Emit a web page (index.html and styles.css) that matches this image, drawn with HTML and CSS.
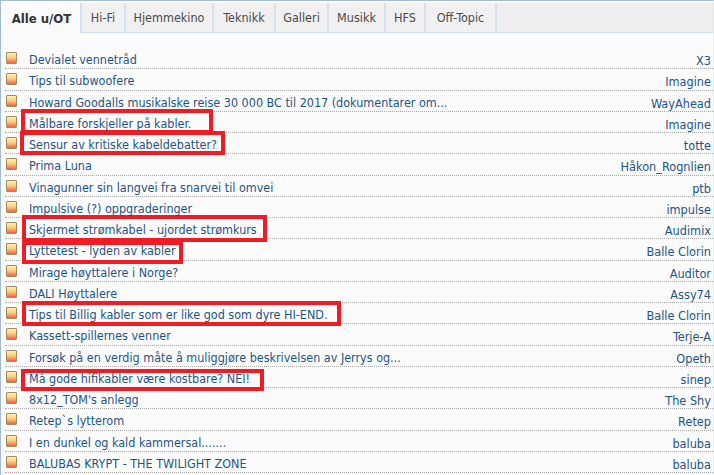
FILE: index.html
```html
<!DOCTYPE html>
<html lang="no">
<head>
<meta charset="utf-8">
<title>Forum</title>
<link rel="stylesheet" href="styles.css">
</head>
<body>
<div class="frame">
  <nav class="tabs">
    <a class="tab active">Alle u/OT</a>
    <a class="tab">Hi-Fi</a>
    <a class="tab">Hjemmekino</a>
    <a class="tab">Teknikk</a>
    <a class="tab">Galleri</a>
    <a class="tab">Musikk</a>
    <a class="tab">HFS</a>
    <a class="tab">Off-Topic</a>
  </nav>
  <ul class="list">
    <li class="row"><i class="ico"></i><a class="title">Devialet vennetråd</a><span class="user">X3</span></li>
    <li class="row"><i class="ico"></i><a class="title">Tips til subwoofere</a><span class="user">Imagine</span></li>
    <li class="row"><i class="ico"></i><a class="title">Howard Goodalls musikalske reise 30 000 BC til 2017 (dokumentarer om...</a><span class="user">WayAhead</span></li>
    <li class="row"><i class="ico"></i><a class="title">Målbare forskjeller på kabler.</a><span class="user">Imagine</span><b class="mark m1"></b></li>
    <li class="row"><i class="ico"></i><a class="title">Sensur av kritiske kabeldebatter?</a><span class="user">totte</span><b class="mark m2"></b></li>
    <li class="row"><i class="ico"></i><a class="title">Prima Luna</a><span class="user">Håkon_Rognlien</span></li>
    <li class="row"><i class="ico"></i><a class="title">Vinagunner sin langvei fra snarvei til omvei</a><span class="user">ptb</span></li>
    <li class="row"><i class="ico"></i><a class="title">Impulsive (?) oppgraderinger</a><span class="user">impulse</span></li>
    <li class="row"><i class="ico"></i><a class="title">Skjermet strømkabel - ujordet strømkurs</a><span class="user">Audimix</span><b class="mark m3"></b></li>
    <li class="row"><i class="ico"></i><a class="title">Lyttetest - lyden av kabler</a><span class="user">Balle Clorin</span><b class="mark m4"></b></li>
    <li class="row"><i class="ico"></i><a class="title">Mirage høyttalere i Norge?</a><span class="user">Auditor</span></li>
    <li class="row"><i class="ico"></i><a class="title">DALI Høyttalere</a><span class="user">Assy74</span></li>
    <li class="row"><i class="ico"></i><a class="title">Tips til Billig kabler som er like god som dyre HI-END.</a><span class="user">Balle Clorin</span><b class="mark m5"></b></li>
    <li class="row"><i class="ico"></i><a class="title">Kassett-spillernes venner</a><span class="user">Terje-A</span></li>
    <li class="row"><i class="ico"></i><a class="title">Forsøk på en verdig måte å muliggjøre beskrivelsen av Jerrys og...</a><span class="user">Opeth</span></li>
    <li class="row"><i class="ico"></i><a class="title">Må gode hifikabler være kostbare? NEI!</a><span class="user">sinep</span><b class="mark m6"></b></li>
    <li class="row"><i class="ico"></i><a class="title">8x12_TOM's anlegg</a><span class="user">The Shy</span></li>
    <li class="row"><i class="ico"></i><a class="title">Retep`s lytterom</a><span class="user">Retep</span></li>
    <li class="row"><i class="ico"></i><a class="title">I en dunkel og kald kammersal.......</a><span class="user">baluba</span></li>
    <li class="row"><i class="ico"></i><a class="title">BALUBAS KRYPT - THE TWILIGHT ZONE</a><span class="user">baluba</span></li>
  </ul>
</div>
</body>
</html>
```
FILE: styles.css
```css
* { box-sizing: border-box; }
html, body { margin: 0; padding: 0; height: 100%; overflow: hidden; }
body { background: #fbfbfb; font-family: "DejaVu Sans Condensed", "DejaVu Sans", sans-serif; font-size: 12.6px; color: #1d5586; }
.frame { height: 475px; border-top: 1px solid #a3bcd4; border-left: 1px solid #a3bcd4; border-right: 1px solid #e3ebf2; padding: 2px 0 0 2px; }
.tabs { display: flex; height: 30px; background: #eeeeee; border-bottom: 1px solid #cfdfee; }
.tab { display: flex; align-items: center; justify-content: center; color: #4a4a4a; border-right: 2px solid #d3e1ee; background: #f0f0f0; font-size: 12.5px; height: 29px; }
.tab:nth-child(2) { width: 44px; }
.tab:nth-child(3) { width: 88px; }
.tab:nth-child(4) { width: 62px; }
.tab:nth-child(5) { width: 53px; }
.tab:nth-child(6) { width: 57px; }
.tab:nth-child(7) { width: 40px; }
.tab:nth-child(8) { width: 71px; }
.tab.active { width: 79px; background: #fbfbfb; color: #333; font-weight: bold; height: 30px; font-size: 13px; }
.list { list-style: none; margin: 0; padding: 15px 0 0 2px; }
.row { position: relative; display: flex; align-items: center; height: 21.26px; padding-right: 2px; border-bottom: 1px dotted #aaaaaa; }
.ico { width: 11px; height: 12px; margin: 0 12px 0 1px; border: 1px solid #a08a60; background: linear-gradient(#fff4a8, #fdc878 50%, #f0604a); flex: none; border-radius: 1px; }
.title { position: relative; z-index: 1; flex: 1; white-space: nowrap; margin-top: 3px; font-size: 12.48px; }
.user { margin-top: 5px; }
.mark { position: absolute; border: 4px solid #ee1c25; }
.m1 { top: -2.3px; left: 15.5px; width: 192.5px; height: 25px; }
.m2 { top: -2.5px; left: 15px; width: 205px; height: 24.5px; }
.m3 { top: -3px; left: 16.5px; width: 245px; height: 26.5px; }
.m4 { top: 1.4px; left: 17px; width: 161px; height: 23.3px; }
.m5 { top: -2.4px; left: 17px; width: 319px; height: 25px; }
.m6 { top: 2.1px; left: 16.3px; width: 243px; height: 22px; }
```
